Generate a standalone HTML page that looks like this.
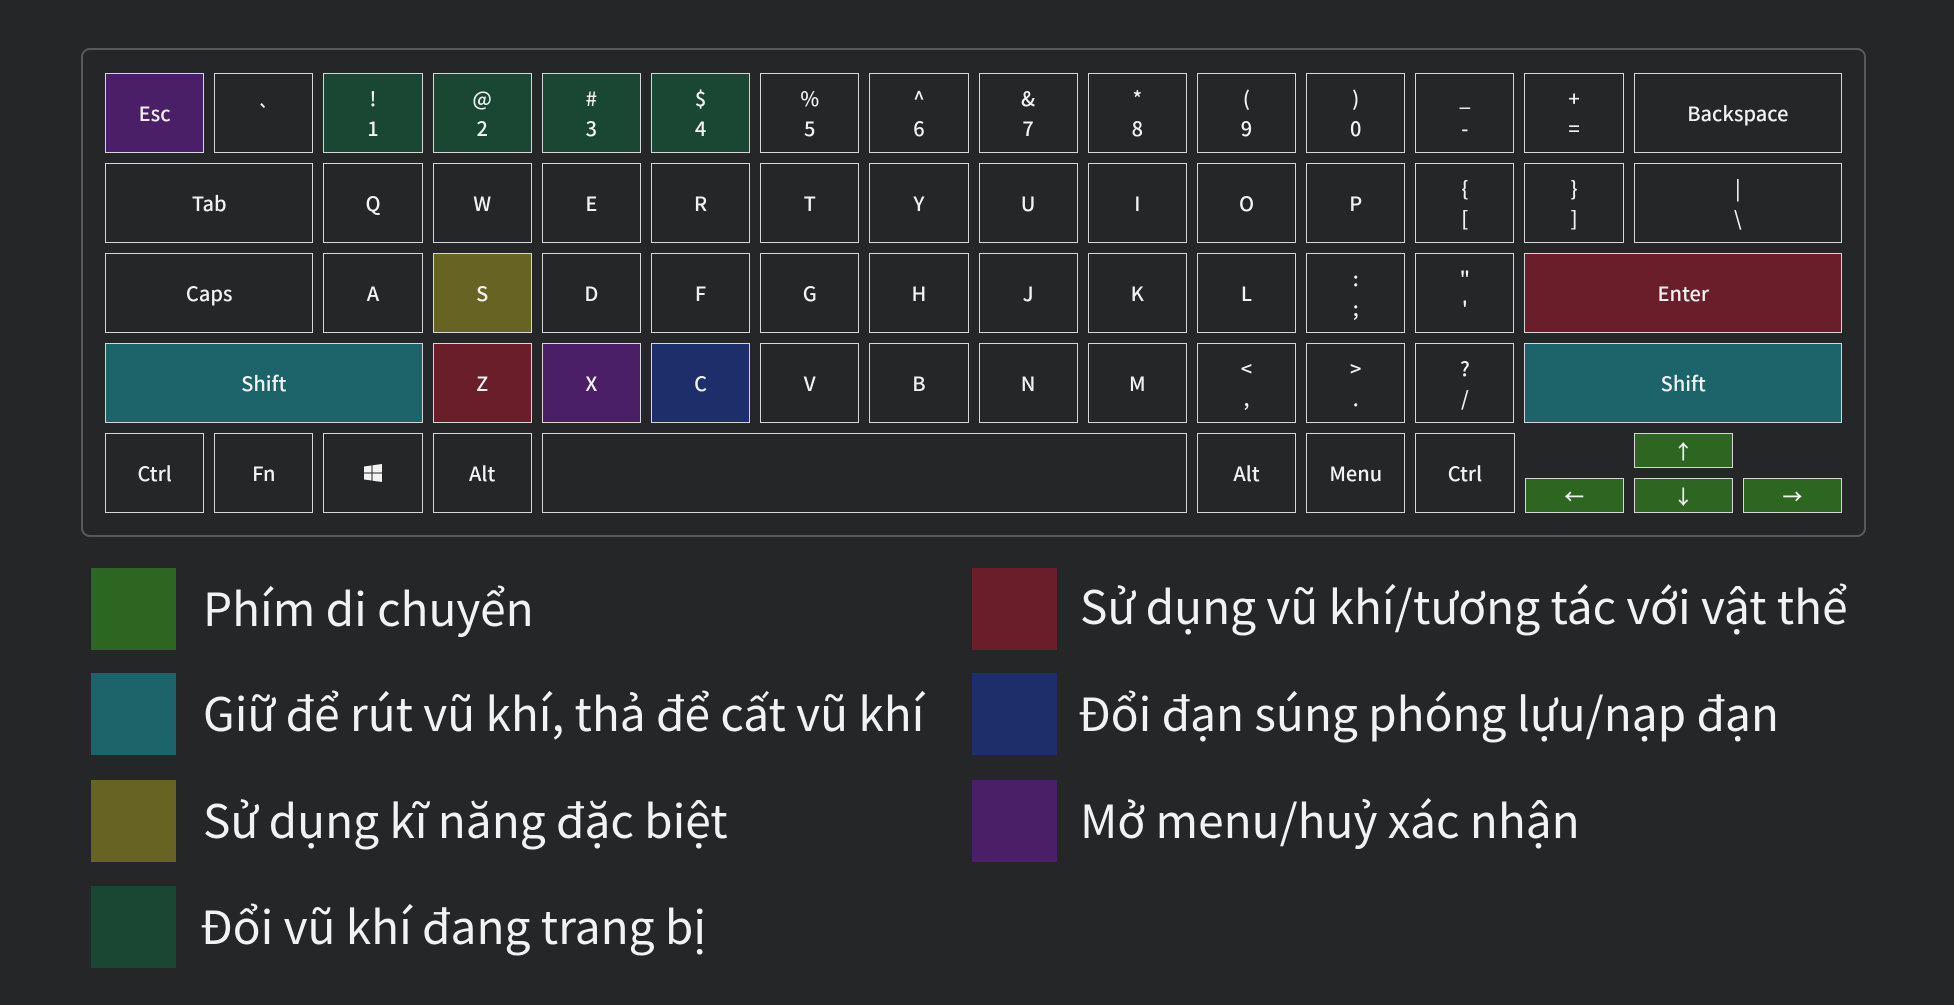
<!DOCTYPE html>
<html><head><meta charset="utf-8"><style>
*{box-sizing:border-box;margin:0;padding:0}
body{width:1954px;height:1005px;background:#252628;overflow:hidden;font-family:"Noto Sans CJK SC","Liberation Sans",sans-serif;color:#f2f2f2}
.board{position:absolute;left:81px;top:48px;width:1785px;height:489px;border:2px solid #58595b;border-radius:9px}
.rows{position:absolute;left:105px;top:73px}
.row{display:flex;gap:10px;margin-bottom:10px;height:80px}
.k{width:99.2px;height:80px;border:1.5px solid #d6d6d6;display:flex;flex-direction:column;align-items:center;justify-content:center;font-size:20px;line-height:30px;background:#252628;font-weight:500}
.w2{width:208.4px}.w3{width:317.6px}.w6{width:645.2px}
.pu{background:#4b1f68}.gn{background:#1a4734}.ol{background:#676423}.rd{background:#6a1e29}.nv{background:#1c2f6a}.tl{background:#1c6469}.ar{background:#2c6620}
.arrows{width:317.6px;height:80px;position:relative}
.arrows .k{position:absolute;height:35px;width:99.2px;font-size:20px}
.leg{position:absolute;font-size:46px;line-height:60px;white-space:nowrap}
.sq{position:absolute;width:85px;height:82px}
</style></head><body>
<div class="board"></div>
<div class="rows">
<div class="row">
<div class="k pu">Esc</div><div class="k">`</div>
<div class="k gn"><span>!</span><span>1</span></div><div class="k gn"><span>@</span><span>2</span></div><div class="k gn"><span>#</span><span>3</span></div><div class="k gn"><span>$</span><span>4</span></div>
<div class="k"><span>%</span><span>5</span></div><div class="k"><span>^</span><span>6</span></div><div class="k"><span>&amp;</span><span>7</span></div><div class="k"><span>*</span><span>8</span></div><div class="k"><span>(</span><span>9</span></div><div class="k"><span>)</span><span>0</span></div><div class="k"><span>_</span><span>-</span></div><div class="k"><span>+</span><span>=</span></div>
<div class="k w2">Backspace</div>
</div>
<div class="row">
<div class="k w2">Tab</div><div class="k">Q</div><div class="k">W</div><div class="k">E</div><div class="k">R</div><div class="k">T</div><div class="k">Y</div><div class="k">U</div><div class="k">I</div><div class="k">O</div><div class="k">P</div>
<div class="k"><span>{</span><span>[</span></div><div class="k"><span>}</span><span>]</span></div><div class="k w2"><span>|</span><span>\</span></div>
</div>
<div class="row">
<div class="k w2">Caps</div><div class="k">A</div><div class="k ol">S</div><div class="k">D</div><div class="k">F</div><div class="k">G</div><div class="k">H</div><div class="k">J</div><div class="k">K</div><div class="k">L</div>
<div class="k"><span>:</span><span>;</span></div><div class="k"><span>"</span><span>'</span></div><div class="k w3 rd">Enter</div>
</div>
<div class="row">
<div class="k w3 tl">Shift</div><div class="k rd">Z</div><div class="k pu">X</div><div class="k nv">C</div><div class="k">V</div><div class="k">B</div><div class="k">N</div><div class="k">M</div>
<div class="k"><span>&lt;</span><span>,</span></div><div class="k"><span>&gt;</span><span>.</span></div><div class="k"><span>?</span><span>/</span></div><div class="k w3 tl">Shift</div>
</div>
<div class="row">
<div class="k">Ctrl</div><div class="k">Fn</div>
<div class="k"><svg width="20" height="20" viewBox="0 0 20 20"><path d="M1 3.5L8.5 2.5V9.5H1Z M9.5 2.3L19 1V9.5H9.5Z M1 10.5H8.5V17.5L1 16.5Z M9.5 10.5H19V19L9.5 17.7Z" fill="#f2f2f2"/></svg></div>
<div class="k">Alt</div><div class="k w6"></div><div class="k">Alt</div><div class="k">Menu</div><div class="k">Ctrl</div>
<div class="arrows">
<div class="k ar" style="left:109.2px;top:0">↑</div>
<div class="k ar" style="left:0;top:45px">←</div>
<div class="k ar" style="left:109.2px;top:45px">↓</div>
<div class="k ar" style="left:218.4px;top:45px">→</div>
</div>
</div>
</div>

<div class="sq" style="left:91px;top:568px;background:#2c6620"></div>
<div class="leg" style="left:203px;top:577px">Phím di chuyển</div>
<div class="sq" style="left:91px;top:673px;background:#1c6469"></div>
<div class="leg" style="left:203px;top:682px">Giữ để rút vũ khí, thả để cất vũ khí</div>
<div class="sq" style="left:91px;top:780px;background:#676423"></div>
<div class="leg" style="left:203px;top:789px">Sử dụng kĩ năng đặc biệt</div>
<div class="sq" style="left:91px;top:886px;background:#1a4734"></div>
<div class="leg" style="left:200px;top:895px">Đổi vũ khí đang trang bị</div>

<div class="sq" style="left:972px;top:568px;background:#6a1e29"></div>
<div class="leg" style="left:1080px;top:575px">Sử dụng vũ khí/tương tác với vật thể</div>
<div class="sq" style="left:972px;top:673px;background:#1c2f6a"></div>
<div class="leg" style="left:1078px;top:682px">Đổi đạn súng phóng lựu/nạp đạn</div>
<div class="sq" style="left:972px;top:780px;background:#4b1f68"></div>
<div class="leg" style="left:1080px;top:789px">Mở menu/huỷ xác nhận</div>
</body></html>
